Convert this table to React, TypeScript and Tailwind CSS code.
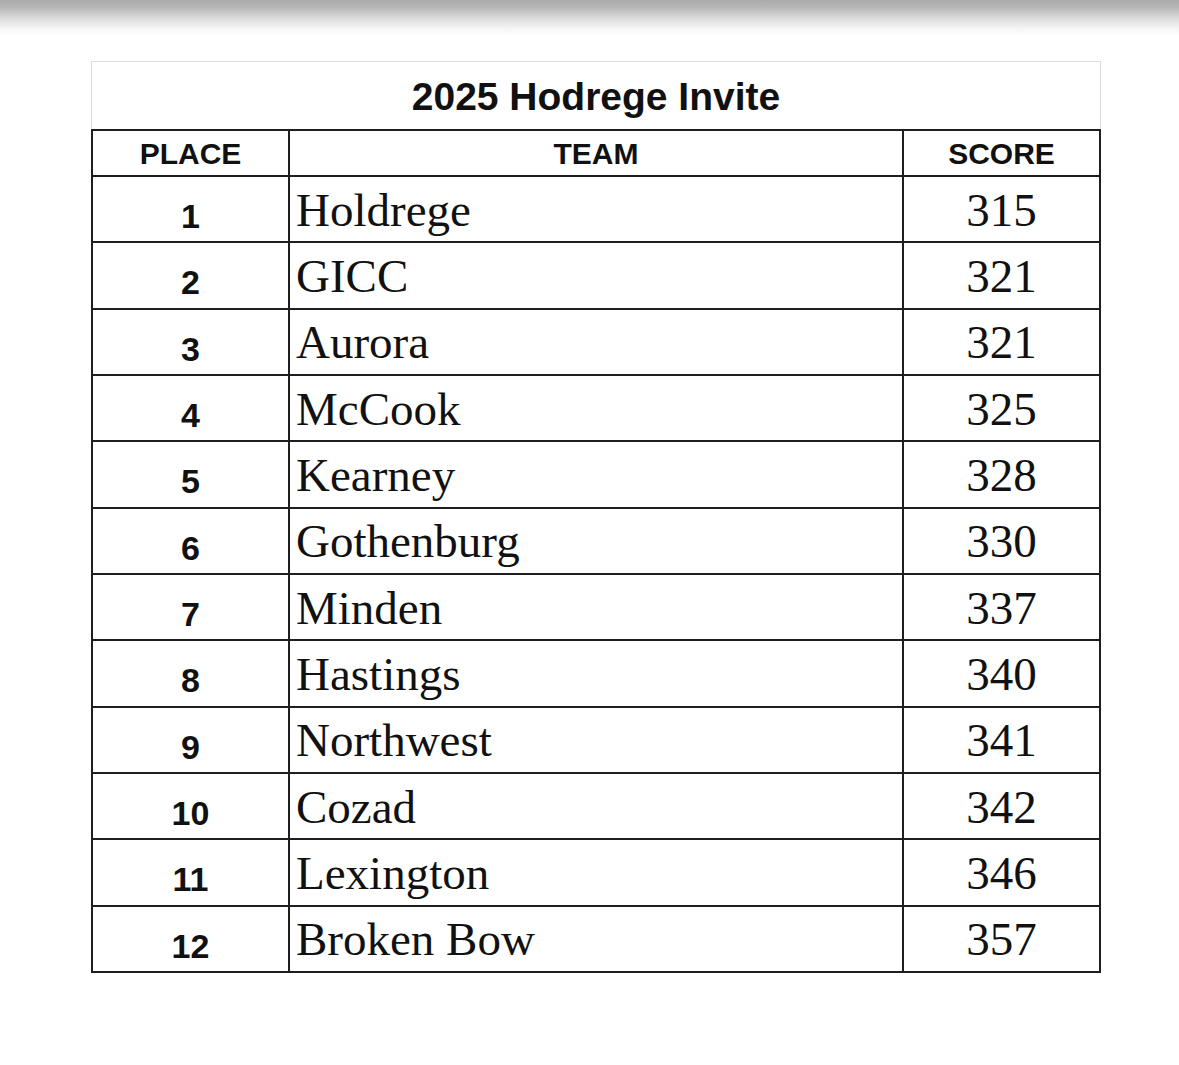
const rows: [number, string, number][] = [
  [1, "Holdrege", 315],
  [2, "GICC", 321],
  [3, "Aurora", 321],
  [4, "McCook", 325],
  [5, "Kearney", 328],
  [6, "Gothenburg", 330],
  [7, "Minden", 337],
  [8, "Hastings", 340],
  [9, "Northwest", 341],
  [10, "Cozad", 342],
  [11, "Lexington", 346],
  [12, "Broken Bow", 357],
];

const sans = "font-['Liberation_Sans',Arial,sans-serif]";
const serif = "font-['Liberation_Serif','Times_New_Roman',serif]";

export default function App() {
  return (
    <div className="min-h-[1065px] w-[1179px] bg-white leading-none">
      <div className="h-[36px] bg-[linear-gradient(to_bottom,#ababab,#b6b6b6_20%,#dadada_50%,#f6f6f6_80%,#ffffff)]" />
      <div className="ml-[91px] mt-[25px] w-[1010px]">
        <div
          className={`flex h-[68px] items-center justify-center border border-b-0 border-[#dcdcdc] pt-[1px] text-[39px] font-bold text-[#111] ${sans}`}
        >
          2025 Hodrege Invite
        </div>
        <div className="border-l-2 border-t-2 border-[#1e1e1e]">
          <div className={`grid h-[46px] grid-cols-[197px_614px_1fr] text-[30px] font-bold text-[#111] ${sans}`}>
            <div className="flex items-center justify-center border-b-2 border-r-2 border-[#1e1e1e] pt-[2px]">PLACE</div>
            <div className="flex items-center justify-center border-b-2 border-r-2 border-[#1e1e1e] pt-[2px]">TEAM</div>
            <div className="flex items-center justify-center border-b-2 border-r-2 border-[#1e1e1e] pt-[2px]">SCORE</div>
          </div>
          {rows.map(([place, team, score]) => (
            <div key={place} className="grid h-[66.33px] grid-cols-[197px_614px_1fr] text-[#111]">
              <div
                className={`flex items-center justify-center border-b-2 border-r-2 border-[#1e1e1e] pt-[14px] text-[34px] font-bold ${sans}`}
              >
                {place}
              </div>
              <div
                className={`flex items-center border-b-2 border-r-2 border-[#1e1e1e] pl-[6px] pt-[2px] text-[47px] ${serif}`}
              >
                {team}
              </div>
              <div
                className={`flex items-center justify-center border-b-2 border-r-2 border-[#1e1e1e] pt-[2px] text-[47px] ${serif}`}
              >
                {score}
              </div>
            </div>
          ))}
        </div>
      </div>
    </div>
  );
}
